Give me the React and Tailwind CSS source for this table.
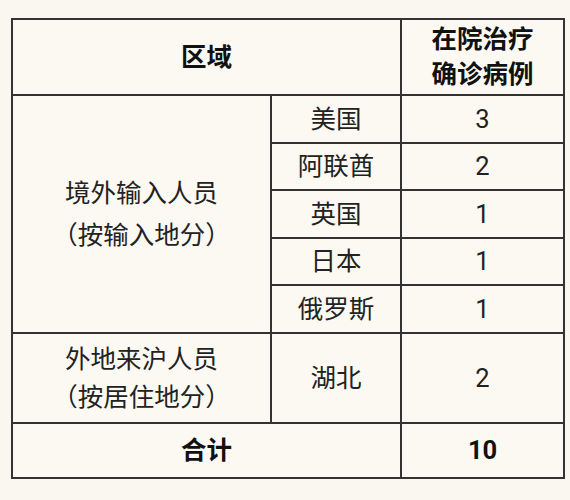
import React from 'react';

const rows = [
  { name: '美国', count: 3 },
  { name: '阿联酋', count: 2 },
  { name: '英国', count: 1 },
  { name: '日本', count: 1 },
  { name: '俄罗斯', count: 1 },
];

const cell = 'border-2 border-[#333] text-center align-middle p-0';

function App() {
  return (
    <div
      className="w-[570px] h-[500px] bg-[#f9f7f0] pt-[18px] pl-[11px] text-[#222] text-[25.5px]"
      style={{ fontFamily: 'Roboto, "Noto Sans CJK SC", sans-serif' }}
    >
      <table className="w-[552px] table-fixed border-collapse bg-[#fbf9f2]">
        <colgroup>
          <col className="w-[259px]" />
          <col className="w-[130px]" />
          <col className="w-[163px]" />
        </colgroup>
        <tbody>
          {/* header */}
          <tr className="h-[76px]">
            <td colSpan={2} className={`${cell} font-bold text-[#111]`}>区域</td>
            <td className={`${cell} font-bold text-[#111] leading-[35px]`}>
              在院治疗<br />确诊病例
            </td>
          </tr>
          {/* overseas */}
          {rows.map((r, i) => (
            <tr key={r.name} className="h-[47.6px]">
              {i === 0 && (
                <td rowSpan={5} className={`${cell} leading-[42px]`}>
                  境外输入人员<br />（按输入地分）
                </td>
              )}
              <td className={cell}>{r.name}</td>
              <td className={cell}>{r.count}</td>
            </tr>
          ))}
          {/* domestic */}
          <tr className="h-[90px]">
            <td className={`${cell} leading-[38px]`}>
              外地来沪人员<br />（按居住地分）
            </td>
            <td className={cell}>湖北</td>
            <td className={cell}>2</td>
          </tr>
          {/* total */}
          <tr className="h-[55px]">
            <td colSpan={2} className={`${cell} font-bold text-[#111]`}>合计</td>
            <td className={`${cell} font-bold text-[#111]`}>10</td>
          </tr>
        </tbody>
      </table>
    </div>
  );
}

export default App;
